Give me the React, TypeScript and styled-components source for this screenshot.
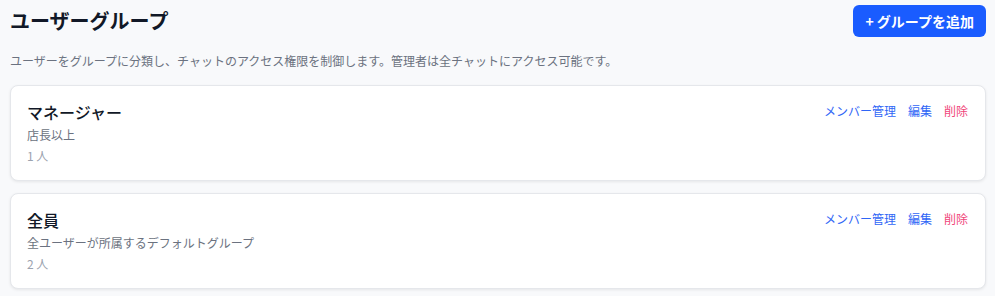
import React from 'react'
import styled, { createGlobalStyle } from 'styled-components'

const GlobalStyle = createGlobalStyle`
  body {
    margin: 0;
    background: #f8f9fb;
    font-family: "Noto Sans CJK JP", "Noto Sans", sans-serif;
    color: #111827;
  }
`

const Page = styled.div`
  padding: 5px 9px 8px 10px;
`

const Header = styled.div`
  display: flex;
  justify-content: space-between;
  align-items: center;
  height: 32px;
`

const Title = styled.h1`
  margin: 0;
  font-size: 20px;
  font-weight: 700;
  line-height: 28px;
  color: #111827;
`

const AddButton = styled.button`
  height: 32px;
  padding: 0 12px;
  border: none;
  border-radius: 6px;
  background: #1a5cff;
  color: #fff;
  font-family: inherit;
  font-size: 14px;
  font-weight: 700;
  cursor: pointer;
`

const Description = styled.p`
  margin: 15px 0 15px;
  font-size: 12px;
  line-height: 18px;
  color: #6b7280;
`

const List = styled.div`
  display: flex;
  flex-direction: column;
  gap: 12px;
`

const Card = styled.div`
  display: flex;
  justify-content: space-between;
  align-items: flex-start;
  padding: 14px 17px 15px 16px;
  background: #fff;
  border: 1px solid #e5e7eb;
  border-radius: 8px;
  box-shadow: 0 1px 3px rgba(0, 0, 0, 0.08);
`

const Info = styled.div`
  display: flex;
  flex-direction: column;
`

const Name = styled.div`
  font-size: 16px;
  font-weight: 500;
  line-height: 24px;
  color: #111827;
`

const Sub = styled.div`
  margin-top: 2px;
  font-size: 12px;
  line-height: 18px;
  color: #6b7280;
`

const Count = styled.div`
  margin-top: 3px;
  font-size: 12px;
  line-height: 18px;
  color: #9ca3af;
`

const Actions = styled.div`
  display: flex;
  gap: 12px;
  padding-top: 2px;
`

const Action = styled.button<{ $danger?: boolean }>`
  padding: 0;
  border: none;
  background: none;
  font-family: inherit;
  font-size: 12px;
  line-height: 18px;
  color: ${(p) => (p.$danger ? '#f0457a' : '#2f66f6')};
  cursor: pointer;
`

const groups = [
  { name: 'マネージャー', desc: '店長以上', count: '1 人' },
  { name: '全員', desc: '全ユーザーが所属するデフォルトグループ', count: '2 人' },
]

const App = () => {
  return (
    <>
      <GlobalStyle />
      <Page>
        <Header>
          <Title>ユーザーグループ</Title>
          <AddButton>+ グループを追加</AddButton>
        </Header>
        <Description>
          ユーザーをグループに分類し、チャットのアクセス権限を制御します。管理者は全チャットにアクセス可能です。
        </Description>
        <List>
          {groups.map((g) => (
            <Card key={g.name}>
              <Info>
                <Name>{g.name}</Name>
                <Sub>{g.desc}</Sub>
                <Count>{g.count}</Count>
              </Info>
              <Actions>
                <Action>メンバー管理</Action>
                <Action>編集</Action>
                <Action $danger>削除</Action>
              </Actions>
            </Card>
          ))}
        </List>
      </Page>
    </>
  )
}

export default App
